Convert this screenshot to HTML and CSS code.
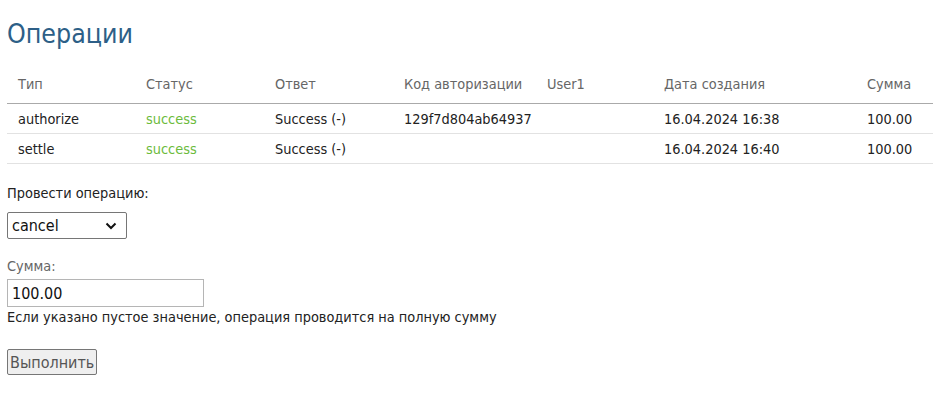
FILE: index.html
```html
<!DOCTYPE html>
<html lang="ru">
<head>
<meta charset="utf-8">
<title>Операции</title>
<link rel="stylesheet" href="styles.css">
</head>
<body>
<h1 class="title">Операции</h1>
<table class="ops">
  <colgroup>
    <col class="c1"><col class="c2"><col class="c3"><col class="c4"><col class="c5"><col class="c6"><col class="c7">
  </colgroup>
  <thead>
    <tr>
      <th>Тип</th><th>Статус</th><th>Ответ</th><th>Код авторизации</th><th>User1</th><th>Дата создания</th><th>Сумма</th>
    </tr>
  </thead>
  <tbody>
    <tr>
      <td>authorize</td><td class="ok">success</td><td>Success (-)</td><td>129f7d804ab64937</td><td></td><td>16.04.2024 16:38</td><td>100.00</td>
    </tr>
    <tr>
      <td>settle</td><td class="ok">success</td><td>Success (-)</td><td></td><td></td><td>16.04.2024 16:40</td><td>100.00</td>
    </tr>
  </tbody>
</table>
<form class="form">
  <label class="lbl" for="op">Провести операцию:</label>
  <div class="select-wrap">
    <select id="op" class="select">
      <option>cancel</option>
      <option>settle</option>
      <option>refund</option>
    </select>
    <svg class="chev" width="12" height="8" viewBox="0 0 12 8"><path d="M1.5 1.5 L6 6 L10.5 1.5" fill="none" stroke="#111" stroke-width="2"/></svg>
  </div>
  <label class="lbl lbl-grey" for="sum">Сумма:</label>
  <input id="sum" class="input" type="text" value="100.00">
  <div class="hint">Если указано пустое значение, операция проводится на полную сумму</div>
  <button type="button" class="btn">Выполнить</button>
</form>
</body>
</html>
```
FILE: styles.css
```css
html, body {
  background: #fff;
}
body {
  margin: 0 0 0 7px;
  font-family: "DejaVu Sans Condensed", "DejaVu Sans", sans-serif;
  font-size: 14.4px;
  color: #222;
}
.title {
  margin: 0;
  padding-top: 15px;
  height: 50px;
  font-size: 26.5px;
  line-height: 37px;
  font-weight: normal;
  color: #2d5f87;
}
.ops {
  width: 100%;
  border-collapse: collapse;
  table-layout: fixed;
}
.c1 { width: 128px; }
.c2 { width: 129px; }
.c3 { width: 129px; }
.c4 { width: 143px; }
.c5 { width: 117px; }
.c6 { width: 203px; }
.ops th {
  text-align: left;
  font-weight: normal;
  color: #666;
  padding: 11px 0 10px 11px;
  line-height: 17px;
  border-bottom: 1px solid #aaa;
  white-space: nowrap;
}
.ops td {
  padding: 7px 0 5px 11px;
  line-height: 17px;
  border-bottom: 1px solid #e2e2e2;
  white-space: nowrap;
}
.ops .ok {
  color: #6cbb3c;
}
.form {
  display: flex;
  flex-direction: column;
  align-items: flex-start;
  padding-top: 21px;
}
.lbl {
  line-height: 17px;
  color: #222;
}
.lbl-grey {
  color: #666;
  margin-top: 19px;
}
.select-wrap {
  position: relative;
  margin-top: 10px;
}
.select {
  appearance: none;
  -webkit-appearance: none;
  box-sizing: border-box;
  width: 120px;
  height: 27px;
  margin: 0;
  padding: 0 0 0 4px;
  border: 1px solid #767676;
  border-radius: 2px;
  background: #fff;
  font-family: "DejaVu Sans Condensed", "DejaVu Sans", sans-serif;
  font-size: 16px;
  color: #111;
}
.chev {
  position: absolute;
  right: 10px;
  top: 10px;
  pointer-events: none;
}
.input {
  box-sizing: border-box;
  width: 197px;
  height: 28px;
  margin: 4px 0 0;
  padding: 0 0 0 4px;
  border: 1px solid #b5b5b5;
  border-radius: 0;
  font-family: "DejaVu Sans Condensed", "DejaVu Sans", sans-serif;
  font-size: 16px;
  color: #111;
}
.hint {
  margin-top: 2px;
  line-height: 17px;
  color: #222;
}
.btn {
  box-sizing: border-box;
  margin-top: 23px;
  height: 26px;
  padding: 0 2px;
  border: 1px solid #767676;
  border-radius: 2px;
  background: #efefef;
  font-family: "DejaVu Sans Condensed", "DejaVu Sans", sans-serif;
  font-size: 16px;
  color: #555;
}
```
